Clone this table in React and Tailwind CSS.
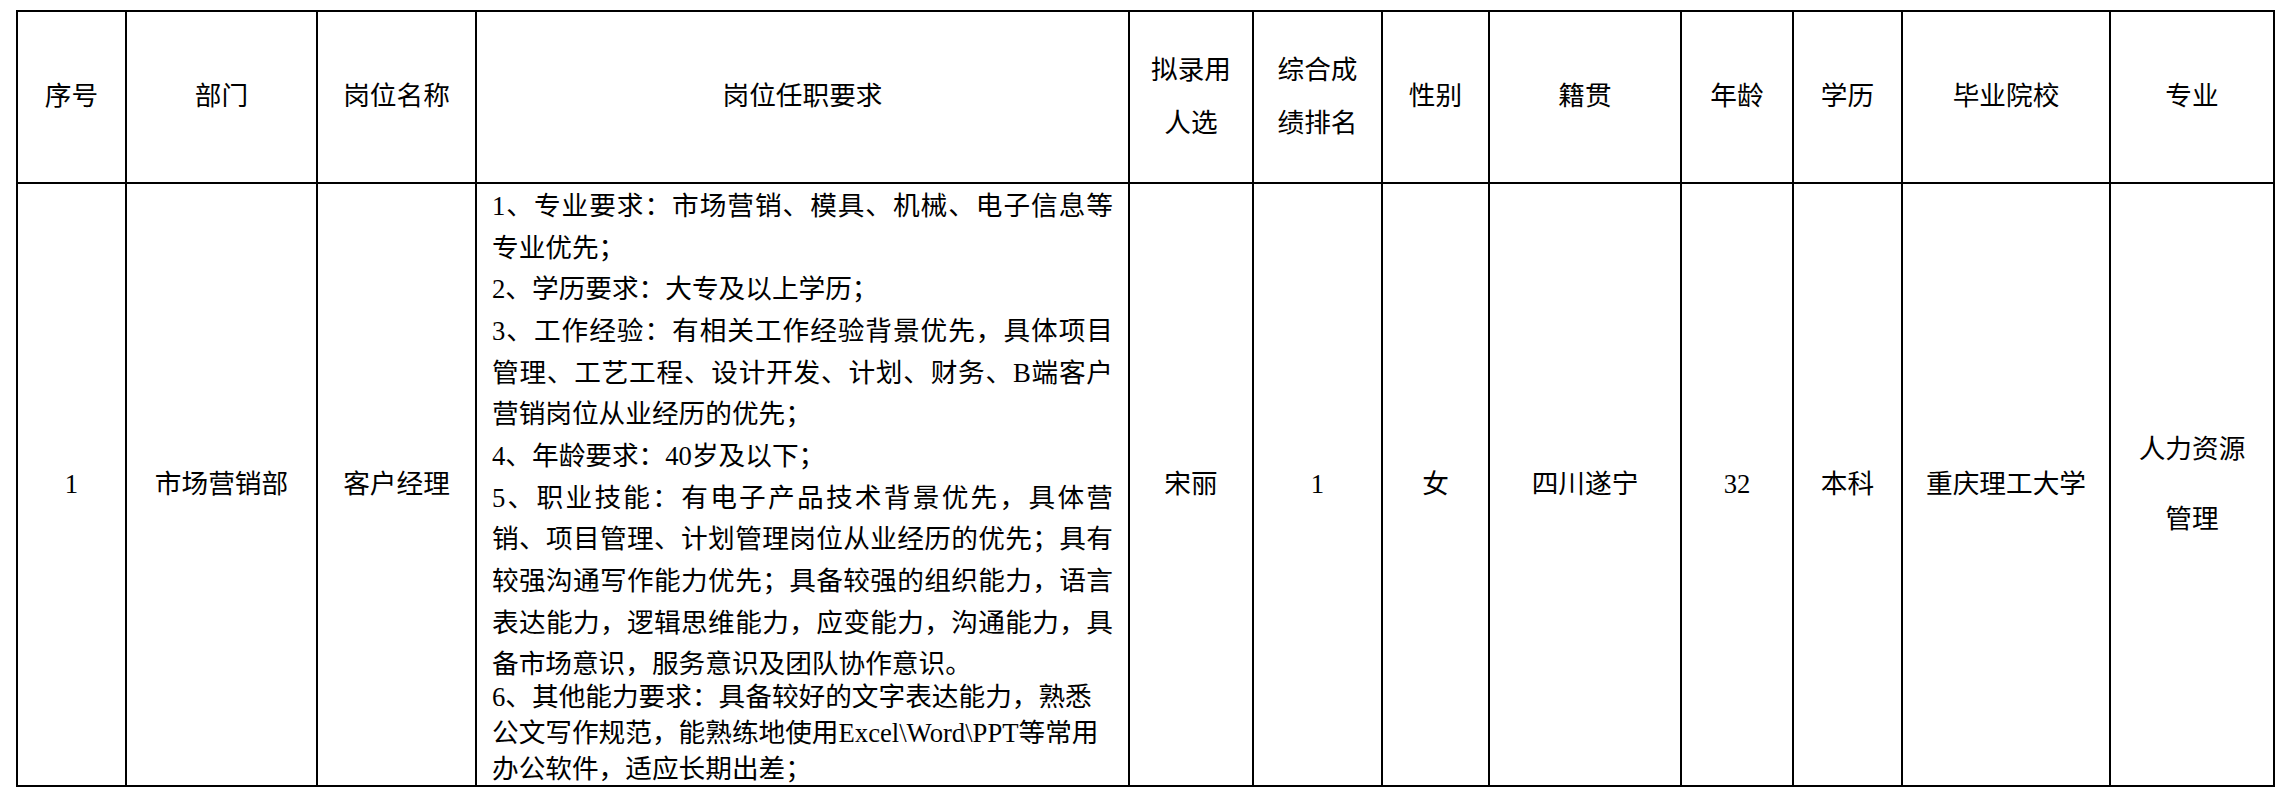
import React from "react";

const FONT = { fontFamily: '"Liberation Serif", "Noto Sans CJK SC", serif' };

const bodyLines = [
  ["1、专业要求：市场营销、模具、机械、电子信息等", true],
  ["专业优先；", false],
  ["2、学历要求：大专及以上学历；", false],
  ["3、工作经验：有相关工作经验背景优先，具体项目", true],
  ["管理、工艺工程、设计开发、计划、财务、B端客户", true],
  ["营销岗位从业经历的优先；", false],
  ["4、年龄要求：40岁及以下；", false],
  ["5、职业技能：有电子产品技术背景优先，具体营", true],
  ["销、项目管理、计划管理岗位从业经历的优先；具有", true],
  ["较强沟通写作能力优先；具备较强的组织能力，语言", true],
  ["表达能力，逻辑思维能力，应变能力，沟通能力，具", true],
  ["备市场意识，服务意识及团队协作意识。", false],
];

const para6 = [
  "6、其他能力要求：具备较好的文字表达能力，熟悉",
  "公文写作规范，能熟练地使用Excel\\Word\\PPT等常用",
  "办公软件，适应长期出差；",
];

function Cell({ children, className = "" }) {
  return (
    <div className={"bg-white flex items-center justify-center text-center " + className}>
      {children}
    </div>
  );
}

export default function App() {
  return (
    <div
      className="w-[2290px] h-[798px] bg-white pt-[10px] pl-[16px] text-black text-[26.67px] leading-[41.67px]"
      style={FONT}
    >
      <div className="inline-grid bg-black p-[2px] gap-[2px] grid-cols-[107px_189px_157px_651px_122px_127px_105px_190px_110px_107px_206px_162px] grid-rows-[170px_601px]">
        {/* header */}
        <Cell>序号</Cell>
        <Cell>部门</Cell>
        <Cell>岗位名称</Cell>
        <Cell>岗位任职要求</Cell>
        <Cell className="leading-[53.33px]">
          <div>
            拟录用
            <br />
            人选
          </div>
        </Cell>
        <Cell className="leading-[53.33px]">
          <div>
            综合成
            <br />
            绩排名
          </div>
        </Cell>
        <Cell>性别</Cell>
        <Cell>籍贯</Cell>
        <Cell>年龄</Cell>
        <Cell>学历</Cell>
        <Cell>毕业院校</Cell>
        <Cell>专业</Cell>

        {/* body */}
        <Cell>1</Cell>
        <Cell>市场营销部</Cell>
        <Cell>客户经理</Cell>
        <div className="bg-white pl-[15px] pr-[15px] pt-[2px]">
          {bodyLines.map(([t, j], i) => (
            <div
              key={i}
              className={j ? "text-justify [text-align-last:justify]" : "text-left"}
            >
              {t}
            </div>
          ))}
          <div className="mt-[-7px] leading-[36.2px]">
            {para6.map((t, i) => (
              <div key={i} className="text-left">
                {t}
              </div>
            ))}
          </div>
        </div>
        <Cell>宋丽</Cell>
        <Cell>1</Cell>
        <Cell>女</Cell>
        <Cell>四川遂宁</Cell>
        <Cell>32</Cell>
        <Cell>本科</Cell>
        <Cell>重庆理工大学</Cell>
        <Cell className="leading-[69.3px]">
          <div>
            人力资源
            <br />
            管理
          </div>
        </Cell>
      </div>
    </div>
  );
}
